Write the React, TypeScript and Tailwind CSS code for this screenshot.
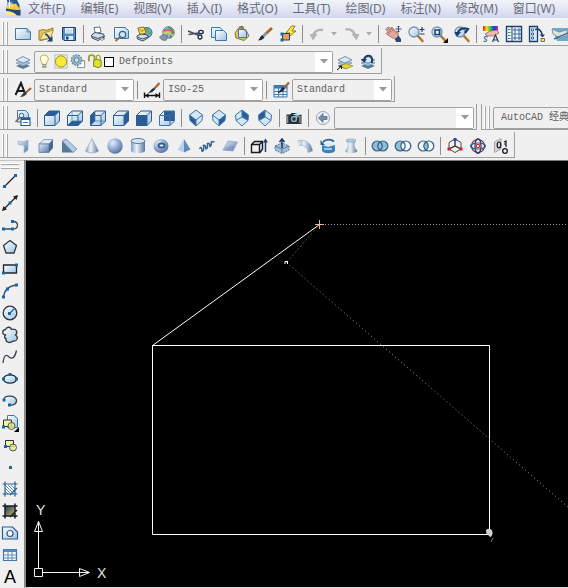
import type { ReactNode } from "react";

type Tool = { label: string; icon: ReactNode };

const NAVY = "#1c3f6e";
const BLUE = "#3d76a8";
const DEEP = "#2b5d94";
const PALE = "#d3e6f5";

function Icon({ children, size = 18 }: { children: ReactNode; size?: number }) {
  return (
    <svg width={size} height={size} viewBox="0 0 18 18" fill="none" aria-hidden="true" className="shrink-0">
      {children}
    </svg>
  );
}

// Gradients shared by every icon on the page
function Gradients() {
  return (
    <svg className="absolute size-0" aria-hidden="true">
      <defs>
        <linearGradient id="paper" x1="0" y1="0" x2="1" y2="1">
          <stop offset="0" stopColor="#ffffff" />
          <stop offset="1" stopColor="#9fc4e2" />
        </linearGradient>
        <linearGradient id="steel" x1="0" y1="0" x2="1" y2="0">
          <stop offset="0" stopColor="#7d9cc4" />
          <stop offset="0.4" stopColor="#eef4fa" />
          <stop offset="1" stopColor="#54779f" />
        </linearGradient>
        <linearGradient id="slope" x1="0" y1="0" x2="1" y2="1">
          <stop offset="0" stopColor="#e4eefa" />
          <stop offset="1" stopColor="#5479ab" />
        </linearGradient>
        <radialGradient id="ball" cx="0.35" cy="0.3" r="0.8">
          <stop offset="0" stopColor="#e6edfb" />
          <stop offset="0.5" stopColor="#91a9d2" />
          <stop offset="1" stopColor="#4b6494" />
        </radialGradient>
        <linearGradient id="rainbow" x1="0" y1="0" x2="1" y2="0">
          <stop offset="0" stopColor="#f01818" />
          <stop offset="0.25" stopColor="#f5e020" />
          <stop offset="0.5" stopColor="#20c840" />
          <stop offset="0.75" stopColor="#2030f0" />
          <stop offset="1" stopColor="#e020c0" />
        </linearGradient>
        <linearGradient id="hatchfill" x1="0" y1="0" x2="1" y2="1">
          <stop offset="0" stopColor="#1f3762" />
          <stop offset="1" stopColor="#c8bb5a" />
        </linearGradient>
      </defs>
    </svg>
  );
}

function Face({ side }: { side: string }) {
  const faces: Record<string, string> = {
    top: "M1.500 6.500L6 2H16.500L12 6.500Z",
    bottom: "M1.500 16.500L6 12H16.500L12 16.500Z",
    left: "M1.500 6.500L6 2V12L1.500 16.500Z",
    right: "M12 6.500L16.500 2V12L12 16.500Z",
    front: "M1.500 6.500H12V16.500H1.500Z",
    back: "M6 2H16.500V12H6Z",
  };
  return (
    <Icon>
      <path d="M1.500 6.500L6 2H16.500V12L12 16.500H1.500Z" fill="url(#paper)" />
      <path d={faces[side]} fill={DEEP} />
      <path
        d="M1.500 6.500L6 2H16.500V12L12 16.500H1.500ZM1.500 6.500H12V16.500M12 6.500L16.500 2"
        stroke={side === "back" ? BLUE : DEEP}
      />
      {(side === "left" || side === "bottom") && <path d="M6 2V12M6 12H16.500M6 12L1.500 16.500" stroke={BLUE} strokeWidth="0.700" />}
    </Icon>
  );
}

function Isometric({ dark, rear }: { dark: string; rear?: boolean }) {
  return (
    <Icon>
      <path d="M9 1L15.500 6L15 11.500L9 17L3 11.500L2.500 6Z" fill={PALE} />
      <path d={dark} fill={DEEP} />
      <path d="M9 1L15.500 6L15 11.500L9 17L3 11.500L2.500 6Z" stroke={BLUE} />
      {rear ? (
        <path d="M9 1V8L15 11.500M9 8L3 11.500" stroke={BLUE} />
      ) : (
        <path d="M2.500 6L9 11L15.500 6M9 11V17" stroke={BLUE} />
      )}
    </Icon>
  );
}

function Layers({ children }: { children?: ReactNode }) {
  return (
    <Icon>
      <path d="M2 13L9 10L16 13L9 16Z" fill="#5a7998" />
      <path d="M2 10L9 7L16 10L9 13Z" fill="#a4bfd6" stroke="#6c8aa8" strokeWidth="0.6" />
      <path d="M2 7L9 3.500L16 7L9 10Z" fill="#dbe9f5" stroke="#5b7a9a" strokeWidth="0.8" />
      {children}
    </Icon>
  );
}

function Lens({ children }: { children?: ReactNode }) {
  return (
    <Icon>
      <path d="M10.500 10.500L15.500 16" stroke="#b8752d" strokeWidth="2.600" strokeLinecap="round" />
      <circle cx="7" cy="7" r="5" fill="url(#paper)" stroke="#7193b0" strokeWidth="1.300" />
      {children}
    </Icon>
  );
}

function Rings({ left, middle, right }: { left?: string; middle?: string; right?: string }) {
  return (
    <Icon>
      <circle cx="6.200" cy="9" r="5" fill={left ?? "#f4f8fb"} />
      <circle cx="11.800" cy="9" r="5" fill={right ?? "#f4f8fb"} />
      <path d="M9 4.900A5 5 0 0 1 9 13.100A5 5 0 0 1 9 4.900Z" fill={middle ?? "#f4f8fb"} />
      <circle cx="6.200" cy="9" r="5" stroke="#345f85" strokeWidth="1.200" />
      <circle cx="11.800" cy="9" r="5" stroke="#345f85" strokeWidth="1.200" />
    </Icon>
  );
}

function Node({ x, y }: { x: number; y: number }) {
  return <rect x={x - 1.5} y={y - 1.5} width="3" height="3" fill="#1668ac" />;
}

const fileTools: Tool[] = [
  {
    label: "新建",
    icon: (
      <Icon>
        <path d="M1.500 3.500H13L16.500 7V14.500H1.500Z" fill="url(#paper)" stroke={BLUE} />
        <path d="M13 3.500V7H16.500" stroke={BLUE} strokeWidth="0.800" />
      </Icon>
    ),
  },
  {
    label: "打开",
    icon: (
      <Icon>
        <path d="M2 15V5.500L7 4.500L9 5.500L16 3L13.500 13L4 15.500Z" fill="#e6c95c" stroke="#9a7a24" />
        <path d="M3 15L6 8L16.500 5L13.500 13Z" fill="#f6e59a" stroke="#9a7a24" strokeWidth="0.700" />
        <path d="M8 9.500C9.500 9 11.500 11 13 14.500" stroke={NAVY} strokeWidth="1.800" />
        <path d="M15.500 11V16.500H10Z" fill={NAVY} />
      </Icon>
    ),
  },
  {
    label: "保存",
    icon: (
      <Icon>
        <path d="M2.500 2.500H15.500V15.500H4L2.500 14Z" fill="#4f8dc0" stroke={NAVY} />
        <path d="M5 3H13V8.500H5Z" fill="#eef5fb" />
        <path d="M6 5H12M6 7H12" stroke="#9fb8cd" strokeWidth="0.800" />
        <path d="M5 11H13V15H5Z" fill="#dce9f4" />
        <path d="M6 11.500H8.500V14.500H6Z" fill={NAVY} />
      </Icon>
    ),
  },
];

const plotTools: Tool[] = [
  {
    label: "打印",
    icon: (
      <Icon>
        <path d="M5 2.500L11 2L12 7L6.500 9Z" fill="#fff" stroke="#5c7187" />
        <path d="M2.500 10L6 7.500L14.500 9L15.500 12L9 15.500L3 13Z" fill="#d5dde5" stroke="#3b5068" />
        <path d="M3 11.500L9 13.500L15 11" stroke="#3b5068" />
        <path d="M10 13L16 13.500L13 15.500Z" fill="#fff" stroke="#5c7187" strokeWidth="0.700" />
      </Icon>
    ),
  },
  {
    label: "打印预览",
    icon: (
      <Icon>
        <path d="M2.500 2.500H13L16.500 5.500V13.500H2.500Z" fill="url(#paper)" stroke={BLUE} />
        <path d="M8 12L3.500 16" stroke="#a4692e" strokeWidth="2" />
        <circle cx="10.500" cy="9.500" r="3.200" fill="#cfe6f5" stroke="#35628a" strokeWidth="1.200" />
      </Icon>
    ),
  },
  {
    label: "发布",
    icon: (
      <Icon>
        <circle cx="12" cy="7.500" r="5" fill="#6cabdc" stroke="#32658f" />
        <path d="M10 3.500C13 4 13 8 16 8.500" stroke="#66a846" strokeWidth="2" />
        <path d="M3 3L9 2L11 8L5 10Z" fill="#ffdb55" stroke="#8b6c16" />
        <path d="M5 4.500L7 6.500L9 4.500" stroke="#8b6c16" />
        <path d="M2 11L6 9L12.500 10L13.500 12.500L8 16L2.500 14Z" fill="#d4dce4" stroke="#384d66" />
        <path d="M3 12.500L8 14L13 12" stroke="#384d66" />
      </Icon>
    ),
  },
  {
    label: "三维 DWF",
    icon: (
      <Icon>
        <circle cx="10.500" cy="7.500" r="5.800" fill="#88bbd8" stroke="#5b86a3" />
        <path d="M10 2C16 4 15 9 12 13" stroke="#40994e" strokeWidth="1.800" />
        <path d="M5.500 6C9 3.500 14 5 16 8" stroke="#d95a4a" strokeWidth="1.500" />
        <path d="M5 8C9 7 13 8 15 11" stroke="#e9c84b" strokeWidth="1.500" />
        <path d="M1.500 12L5 9.500L10 11L8 15.500L4 15Z" fill="#8796a6" stroke="#5c6c7b" strokeWidth="0.700" />
      </Icon>
    ),
  },
];

const clipboardTools: Tool[] = [
  {
    label: "剪切",
    icon: (
      <Icon>
        <path d="M1 6L12 10.500M1.500 9.500L12 8" stroke="#454d5c" strokeWidth="1.400" />
        <ellipse cx="14" cy="7" rx="2.300" ry="1.700" stroke="#222c48" strokeWidth="1.300" />
        <ellipse cx="13" cy="12" rx="1.900" ry="2" stroke="#222c48" strokeWidth="1.300" />
      </Icon>
    ),
  },
  {
    label: "复制",
    icon: (
      <Icon>
        <path d="M1.500 2.500H10L12.500 5V12.500H1.500Z" fill="url(#paper)" stroke={BLUE} />
        <path d="M5.500 5.500H13.500L16.500 8.500V15.500H5.500Z" fill="url(#paper)" stroke={BLUE} />
      </Icon>
    ),
  },
  {
    label: "粘贴",
    icon: (
      <Icon>
        <path d="M6 2.500L13 5L16 11L11 15.500L3 13L2 8Z" fill="#e6c463" stroke="#94752e" />
        <path d="M5.500 4.500H11L13.500 7V12.500H5.500Z" fill="url(#paper)" stroke={BLUE} />
        <path d="M6 2.500L9 1.500L11 3.500" stroke="#716344" strokeWidth="1.400" />
      </Icon>
    ),
  },
  {
    label: "特性匹配",
    icon: (
      <Icon>
        <path d="M16 3L9.500 9" stroke="#a9622b" strokeWidth="2.800" />
        <path d="M10.500 8L7.500 11" stroke="#8697a7" strokeWidth="3" />
        <path d="M8.500 12.500C7 14.500 5 15.500 2 15.500C4 13.500 4 11 6.500 10Z" fill="#222a34" />
      </Icon>
    ),
  },
  {
    label: "块编辑器",
    icon: (
      <Icon>
        <path d="M12.500 1L7 8H11L8.500 13L17 6H13L16 1Z" fill="#ffe63e" stroke="#896f1b" strokeWidth="0.900" />
        <path d="M3.500 8.500H10.500V15H3.500Z" fill="#f19a62" stroke={NAVY} />
        <Node x={3} y={15} />
        <Node x={3} y={9} />
      </Icon>
    ),
  },
];

const undoIcon = (
  <Icon>
    <path d="M5 12C5.500 7 9 4 15 5" stroke="#b2b5b8" strokeWidth="2.600" />
    <path d="M1.500 9H9.500L5 15.500Z" fill="#b2b5b8" />
  </Icon>
);

const redoIcon = (
  <Icon>
    <path d="M2.500 4.500C8 3.500 12 7 12.500 12" stroke="#b2b5b8" strokeWidth="2.600" />
    <path d="M8.500 9H16.500L13.500 15.500Z" fill="#b2b5b8" />
  </Icon>
);

const zoomTools: Tool[] = [
  {
    label: "实时平移",
    icon: (
      <Icon>
        <path
          d="M1.500 4L3 3.500L7 7L3.500 2.500L5 2L9 6L7 2.500L8.500 2.500L12.500 8L12.500 6L14 7L14.500 12L11.500 14.500L6 11.500L2 8.500L3 7.500L5.500 8.500Z"
          fill="#e2a79a"
          stroke="#9b5d59"
          strokeWidth="0.700"
        />
        <path d="M11 14L14.500 10.500L17 14V17H12Z" fill="#234a7b" />
        <path d="M14.500 1V7M11.500 4H17.500M13.500 2L14.500 1L15.500 2M13.500 6L14.500 7L15.500 6" stroke={NAVY} strokeWidth="0.900" />
      </Icon>
    ),
  },
  {
    label: "实时缩放",
    icon: (
      <Lens>
        <path d="M15 2V7M12.500 4.500H17.500M12.500 9H17.500" stroke={NAVY} strokeWidth="1.200" />
      </Lens>
    ),
  },
  {
    label: "窗口缩放",
    icon: (
      <Lens>
        <path d="M5 5H9.500V9.500H5Z" fill="#eef7ff" stroke={NAVY} strokeWidth="1.600" />
        <path d="M18 13V18H13Z" fill="#111" />
      </Lens>
    ),
  },
  {
    label: "缩放上一个",
    icon: (
      <Lens>
        <path d="M4 9C5 5 9 2 15 4L12 8" stroke={NAVY} strokeWidth="2.200" />
        <path d="M1.500 7L8 7L4 12Z" fill={NAVY} />
      </Lens>
    ),
  },
];

const paletteTools: Tool[] = [
  {
    label: "特性",
    icon: (
      <Icon>
        <path d="M1 1H16V6H1Z" fill="url(#rainbow)" />
        <path d="M3 9L8 6L15 5L17 8L11 11H5Z" fill="#f0b8a6" stroke="#805b5b" strokeWidth="0.700" />
        <path d="M6 12C3 10.500 1 13 3.500 14C6 15 4 17.500 1.500 16" stroke="#52749d" strokeWidth="1.200" />
        <path d="M10.500 17L13.500 10L16.500 17M11.500 15H15.500" stroke="#303b50" strokeWidth="1.200" />
      </Icon>
    ),
  },
  {
    label: "设计中心",
    icon: (
      <Icon>
        <path d="M1.500 1.500H16.500V16.500H1.500Z" fill="#edf4fa" stroke={NAVY} strokeWidth="1.400" />
        <path d="M7 2V16" stroke={NAVY} />
        <path d="M3 4.500H5.500M3 7.500H5.500M3 10.500H5.500M3 13.500H5.500" stroke="#4a8d3c" />
        <path d="M9 4H11V6H9ZM13 4H15V6H13ZM9 8H11V10H9ZM13 8H15V10H13Z" stroke={DEEP} strokeWidth="0.900" />
        <path d="M9 12H11V14H9ZM13 12H15V14H13Z" fill="#eee35b" stroke={DEEP} strokeWidth="0.900" />
      </Icon>
    ),
  },
  {
    label: "工具选项板",
    icon: (
      <Icon>
        <path d="M1.500 1.500H9.500V16.500H1.500Z" fill="#dbeaf6" stroke={NAVY} strokeWidth="1.300" />
        <path d="M3.500 4H5.500V6H3.500ZM3.500 8H5.500V10H3.500ZM3.500 12H5.500V14H3.500Z" fill="#fff" stroke={DEEP} strokeWidth="0.900" />
        <path d="M7 4.500C11 3 14 6 14.500 11" stroke={NAVY} strokeWidth="1.600" />
        <path d="M11.500 9.500H17L14.500 12.500Z" fill={NAVY} />
        <path d="M13 13.500H16.500V16.500H13Z" fill="#eee35b" stroke="#555" strokeWidth="0.800" />
      </Icon>
    ),
  },
  {
    label: "图纸集管理器",
    icon: (
      <Icon>
        <path d="M1 3H17V16H6Z" fill="#6fa9c8" />
        <path d="M1 4L8 7L16 5L17 10L9 13L2 9Z" fill="#dfe5e5" stroke="#80949d" />
        <path d="M3 14L17 8" stroke="#3d7190" strokeWidth="1.500" />
      </Icon>
    ),
  },
];

const viewTools: Tool[] = [
  { label: "俯视", icon: <Face side="top" /> },
  { label: "仰视", icon: <Face side="bottom" /> },
  { label: "左视", icon: <Face side="left" /> },
  { label: "右视", icon: <Face side="right" /> },
  { label: "前视", icon: <Face side="front" /> },
  { label: "后视", icon: <Face side="back" /> },
];

const isoTools: Tool[] = [
  { label: "西南等轴测", icon: <Isometric dark="M2.500 6L9 11V17L3 11.500Z" /> },
  { label: "东南等轴测", icon: <Isometric dark="M9 11L15.500 6L15 11.500L9 17Z" /> },
  { label: "东北等轴测", icon: <Isometric rear dark="M9 1L15.500 6L15 11.500L9 8Z" /> },
  { label: "西北等轴测", icon: <Isometric rear dark="M9 1L2.500 6L3 11.500L9 8Z" /> },
];

const solidTools: Tool[] = [
  {
    label: "多段体",
    icon: (
      <Icon>
        <path d="M4 4L9 6V9L4 8Z" fill="#b9d5ee" />
        <path d="M9 5L14 3V13L10 16V8L4 7V4Z" fill="url(#slope)" stroke="#8cadcf" strokeWidth="0.600" />
      </Icon>
    ),
  },
  {
    label: "长方体",
    icon: (
      <Icon>
        <path d="M2 7L7 2.500H16L12 7Z" fill="#dfeaf5" stroke="#6685a8" strokeWidth="0.700" />
        <path d="M2 7H12V15.500H2Z" fill="url(#slope)" stroke="#587799" strokeWidth="0.700" />
        <path d="M12 7L16 2.500V11L12 15.500Z" fill="#4c688a" />
      </Icon>
    ),
  },
  {
    label: "楔体",
    icon: (
      <Icon>
        <path d="M2 4L6 2L17 12L13 15.500Z" fill="#b2cae3" stroke="#607f9f" strokeWidth="0.700" />
        <path d="M2 4V15.500H13Z" fill="#56789c" />
      </Icon>
    ),
  },
  {
    label: "圆锥体",
    icon: (
      <Icon>
        <path d="M9 1.500L15.500 14C13 16.500 5 16.500 2.500 14Z" fill="url(#steel)" stroke="#8295a9" strokeWidth="0.500" />
      </Icon>
    ),
  },
  {
    label: "球体",
    icon: (
      <Icon>
        <circle cx="9" cy="9" r="7.700" fill="url(#ball)" />
      </Icon>
    ),
  },
  {
    label: "圆柱体",
    icon: (
      <Icon>
        <path d="M2 4V14C4 17 14 17 16 14V4Z" fill="url(#steel)" />
        <ellipse cx="9" cy="4" rx="7" ry="2.500" fill="#d4e2ef" stroke="#5d7ca0" />
      </Icon>
    ),
  },
  {
    label: "圆环体",
    icon: (
      <Icon>
        <ellipse cx="9" cy="9" rx="7.500" ry="7" fill="url(#ball)" />
        <ellipse cx="9.500" cy="8.500" rx="3" ry="2" fill="#e9f2fa" stroke="#2f5f8e" strokeWidth="2" />
      </Icon>
    ),
  },
  {
    label: "棱锥体",
    icon: (
      <Icon>
        <path d="M9 2L2.500 13L9 15.500Z" fill="#b8d1ec" />
        <path d="M9 2L15.500 12.500L9 15.500Z" fill="#6389b9" />
      </Icon>
    ),
  },
  {
    label: "螺旋",
    icon: (
      <Icon>
        <path
          d="M1.500 12C3 9 4 11 4 14C6 15 6 9 5.500 8.500C7 8 8 9 8 12C10 12 9.500 7 9.500 6.500C11 6 12 7 12 9.500C14 9 13 5 13.500 4.500L16.500 5"
          stroke="#35638f"
          strokeWidth="1.500"
        />
      </Icon>
    ),
  },
  {
    label: "平面曲面",
    icon: (
      <Icon>
        <path d="M2 13L7 4L16.500 5L12 14Z" fill="url(#slope)" stroke="#8da2c5" strokeWidth="0.700" />
        <path d="M9 9L14.500 9L12 14L2 13Z" fill="#8498c4" opacity="0.600" />
      </Icon>
    ),
  },
];

const solidEditTools: Tool[] = [
  {
    label: "拉伸",
    icon: (
      <Icon>
        <path d="M1.500 7.500L4.500 4.500H12.500V12L10 15.500H1.500ZM1.500 7.500H9.500V15.500M9.500 7.500L12.500 4.500" stroke="#171c24" strokeWidth="1.400" />
        <path d="M15.500 15V4" stroke={NAVY} strokeWidth="1.500" />
        <path d="M13 5.500L15.500 1.500L18 5.500Z" fill={NAVY} />
      </Icon>
    ),
  },
  {
    label: "按住/拖动",
    icon: (
      <Icon>
        <path d="M2 9L9 6L16 9V13L9 16.500L2 13Z" fill="#a8bfd2" stroke="#56789a" strokeDasharray="2 1" />
        <path d="M2 9L9 12L16 9M9 12V16" stroke="#56789a" />
        <path d="M9 11V3M6.500 5L9 2L11.500 5" stroke={NAVY} strokeWidth="1.600" />
      </Icon>
    ),
  },
  {
    label: "扫掠",
    icon: (
      <Icon>
        <path d="M2 4C9 1 16 7 16.500 14L12 15.500C11.500 10 7 7 3 8.500Z" fill="url(#steel)" stroke="#8aa5be" strokeWidth="0.600" />
        <ellipse cx="3" cy="6.300" rx="1.500" ry="2.300" fill="#dce9f5" />
      </Icon>
    ),
  },
  {
    label: "旋转",
    icon: (
      <Icon>
        <path d="M3 8V14C5 17 14 17 16 14V8Z" fill="#3983b8" />
        <path d="M3 8C5 5.500 14 5.500 16 8L9 10Z" fill="#d7eaf8" />
        <path d="M4 5C7 2 12 2 15 4.500" stroke="#24669c" strokeWidth="1.800" />
        <path d="M1.500 3V8H6Z" fill="#24669c" />
        <path d="M5 12H13" stroke="#9cc8e6" strokeWidth="2" />
      </Icon>
    ),
  },
  {
    label: "放样",
    icon: (
      <Icon>
        <path d="M4 3H14C11.500 7 12 10 15.500 14C13 17 5 17 3 14C6.500 10 6.500 7 4 3Z" fill="url(#steel)" />
        <ellipse cx="9" cy="3.500" rx="5" ry="1.500" fill="#b8d0e5" stroke="#7192b4" strokeWidth="0.600" />
      </Icon>
    ),
  },
];

const booleanTools: Tool[] = [
  { label: "并集", icon: <Rings left="#8fbfd6" middle="#8fbfd6" right="#8fbfd6" /> },
  { label: "差集", icon: <Rings left="#8fbfd6" /> },
  { label: "交集", icon: <Rings middle="#8fbfd6" /> },
];

const orbitTools: Tool[] = [
  {
    label: "三维移动",
    icon: (
      <Icon>
        <path d="M9 2L15 5.500V12L9 15.500L3 12V5.500Z" stroke="#33383f" strokeWidth="0.900" />
        <path d="M9 3V9M9 9L3 12M9 9L15 12" stroke="#222" strokeWidth="1.300" />
        <path d="M7.500 1H10.500V4H7.500Z" fill="#2444b8" />
        <path d="M1.500 10.500H4.500V13.500H1.500ZM13.500 10.500H16.500V13.500H13.500Z" fill="#c32424" />
      </Icon>
    ),
  },
  {
    label: "三维旋转",
    icon: (
      <Icon>
        <circle cx="9" cy="9" r="6.500" stroke="#7c2929" strokeWidth="1.200" />
        <ellipse cx="9" cy="9" rx="3" ry="7.500" stroke="#24325b" strokeWidth="1.200" />
        <ellipse cx="9" cy="9" rx="7.500" ry="3" stroke="#28619a" strokeWidth="1.200" />
        <path d="M7.500 7.500H10.500V10.500H7.500Z" fill="#fff" stroke="#d02d2d" />
      </Icon>
    ),
  },
  {
    label: "三维对齐",
    icon: (
      <Icon>
        <path d="M2.500 5L9 1.500V12L2.500 15.500Z" fill="#d4d7da" stroke="#a4a8ad" />
        <ellipse cx="7" cy="8" rx="1.800" ry="3" stroke="#17191c" strokeWidth="1.200" />
        <path d="M12 5L14 4V10M12 7H14" stroke="#17191c" strokeWidth="1.200" />
        <circle cx="13" cy="14" r="2.300" stroke="#17191c" strokeWidth="1.300" />
      </Icon>
    ),
  },
];

const drawTools: Tool[] = [
  {
    label: "直线",
    icon: (
      <Icon>
        <path d="M3.500 14.500L14.500 3.500" stroke="#222" strokeWidth="1.300" />
        <Node x={3.5} y={14.5} />
        <Node x={14.5} y={3.5} />
      </Icon>
    ),
  },
  {
    label: "构造线",
    icon: (
      <Icon>
        <path d="M2 16L16 2" stroke="#222" strokeWidth="1.300" />
        <path d="M1 17L2.500 12L6 15.500ZM17 1L12 2.500L15.500 6Z" fill="#222" />
        <Node x={9} y={9} />
      </Icon>
    ),
  },
  {
    label: "多段线",
    icon: (
      <Icon>
        <path d="M3 13H12M12 5.500C18 5.500 18 13 12 13" stroke="#3c4856" strokeWidth="1.300" />
        <Node x={2.5} y={13} />
        <Node x={11.5} y={13} />
        <Node x={11.5} y={5.5} />
      </Icon>
    ),
  },
  {
    label: "正多边形",
    icon: (
      <Icon>
        <path d="M9 2.500L15.500 7.500L13 15H5L2.500 7.500Z" fill="url(#paper)" stroke="#333a42" strokeWidth="1.300" />
      </Icon>
    ),
  },
  {
    label: "矩形",
    icon: (
      <Icon>
        <path d="M2.500 5H15.500V13H2.500Z" fill="url(#paper)" stroke="#20262d" strokeWidth="1.300" />
        <Node x={2.5} y={13} />
        <Node x={15.5} y={5} />
      </Icon>
    ),
  },
  {
    label: "圆弧",
    icon: (
      <Icon>
        <path d="M2.500 15.500C3 9 7 4 15.500 3" stroke="#4b525b" strokeWidth="1.300" />
        <Node x={2.5} y={15} />
        <Node x={6.5} y={7} />
        <Node x={15.5} y={3} />
      </Icon>
    ),
  },
  {
    label: "圆",
    icon: (
      <Icon>
        <circle cx="9" cy="9" r="6.800" fill="url(#paper)" stroke="#2c333b" strokeWidth="1.300" />
        <path d="M9 9L13 5" stroke="#1668ac" strokeWidth="1.200" />
        <Node x={8.5} y={9.5} />
      </Icon>
    ),
  },
  {
    label: "修订云线",
    icon: (
      <Icon>
        <path
          d="M5 9C1 9 .500 4 4.500 3.500C6 0 10 1 10.500 3.500C15 2 17.500 6 14.500 9C18 11 16 16 12 15C9 18 4 16 5 12.500C3 12 3 10 5 9Z"
          fill="url(#paper)"
          stroke="#353d46"
          strokeWidth="1.300"
        />
      </Icon>
    ),
  },
  {
    label: "样条曲线",
    icon: (
      <Icon>
        <path d="M2 15C3 7 5 6 8 9C12 12 14 9 15.500 2.500" stroke="#3a4047" strokeWidth="1.300" />
      </Icon>
    ),
  },
  {
    label: "椭圆",
    icon: (
      <Icon>
        <ellipse cx="9" cy="9" rx="6.500" ry="4.200" fill="url(#paper)" stroke="#222a32" strokeWidth="1.300" />
        <Node x={2.5} y={9} />
        <Node x={15.5} y={9} />
        <Node x={9} y={4.5} />
      </Icon>
    ),
  },
  {
    label: "椭圆弧",
    icon: (
      <Icon>
        <path d="M3 7C4 3 14 3 15.500 8C16 12 12 13.500 8.500 13" fill="url(#paper)" stroke="#3b434c" strokeWidth="1.300" />
        <Node x={3} y={8} />
        <Node x={8.5} y={13} />
      </Icon>
    ),
  },
  {
    label: "插入块",
    icon: (
      <Icon>
        <path d="M6.500 1.500H13L16.500 4.500V13.500H6.500Z" fill="url(#paper)" stroke={BLUE} />
        <path d="M2.500 6H10.500V12.500H2.500Z" fill="#f6efa4" stroke="#26323d" />
        <circle cx="10.500" cy="12" r="3.500" fill="#e5e98d" stroke="#4e5f48" fillOpacity="0.800" />
        <Node x={2.5} y={13} />
        <path d="M18 13V18H13Z" fill="#000" />
      </Icon>
    ),
  },
  {
    label: "创建块",
    icon: (
      <Icon>
        <path d="M4.500 4.500H12.500V10.500H4.500Z" fill="#f6efa4" stroke="#26323d" />
        <circle cx="12" cy="11.500" r="3.500" fill="#e5e98d" stroke="#4e5f48" fillOpacity="0.800" />
        <Node x={4.5} y={10.5} />
      </Icon>
    ),
  },
  {
    label: "点",
    icon: (
      <Icon>
        <Node x={9.5} y={9.5} />
      </Icon>
    ),
  },
  {
    label: "图案填充",
    icon: (
      <Icon>
        <path d="M4 4H14V14H4Z" fill="#fff" />
        <path d="M4 5L13 14M4 8L10 14M4 11L7 14M7 5L14 12M10 5L14 9" stroke={BLUE} strokeWidth="0.900" />
        <path d="M4 1.500V16.500M14 1.500V16.500M1.500 4H16.500M1.500 14H16.500M9 15L16 8" stroke={DEEP} strokeWidth="1.200" />
      </Icon>
    ),
  },
  {
    label: "渐变色",
    icon: (
      <Icon>
        <path d="M4 4H14V14H4Z" fill="url(#hatchfill)" />
        <path d="M4 1.500V16.500M14 1.500V16.500M1.500 4H16.500M1.500 14H16.500M9 15L16 8" stroke="#171d2a" strokeWidth="1.500" />
      </Icon>
    ),
  },
  {
    label: "面域",
    icon: (
      <Icon>
        <path d="M1.500 3H11.500L16.500 8V15H1.500Z" fill="url(#paper)" stroke={DEEP} strokeWidth="1.200" />
        <circle cx="9" cy="9.500" r="3" fill="#fff" stroke="#33587c" strokeWidth="1.200" />
      </Icon>
    ),
  },
  {
    label: "表格",
    icon: (
      <Icon>
        <path d="M2.500 3.500H15.500V14.500H2.500Z" fill="#f3f8fc" stroke={BLUE} strokeWidth="1.200" />
        <path d="M2.500 3.500H15.500V6H2.500Z" fill="#4d8cc2" />
        <path d="M2.500 9H15.500M2.500 12H15.500M7 5V14.500M11 5V14.500" stroke="#5b91be" />
      </Icon>
    ),
  },
];

function ToolButton({ label, icon }: Tool) {
  return (
    <button type="button" aria-label={label} className="flex h-[22px] w-[23px] shrink-0 items-center justify-center">
      {icon}
    </button>
  );
}

function ToolGroup({ tools }: { tools: Tool[] }) {
  return tools.map((tool) => <ToolButton key={tool.label} {...tool} />);
}

function Separator() {
  return (
    <span className="flex w-1.5 shrink-0 justify-center">
      <span className="h-[18px] w-px bg-[#8c8c8c]" />
    </span>
  );
}

function Toolbar({ label, wide, children }: { label: string; wide?: boolean; children: ReactNode }) {
  return (
    <div
      role="toolbar"
      aria-label={label}
      className={`flex h-[26px] shrink-0 items-center overflow-hidden border-b border-[#a0a0a0] pt-0.5 ${
        wide ? "min-w-0 flex-1" : "border-r pr-0.5"
      }`}
    >
      <span className="flex h-full w-[11px] shrink-0 gap-0.5 pl-0.5">
        <span className="w-0.5 border-r border-[#a8a8a8] bg-white" />
        <span className="w-0.5 border-r border-[#a8a8a8] bg-white" />
      </span>
      {children}
    </div>
  );
}

function FlyoutArrow({ label }: { label: string }) {
  return (
    <button type="button" aria-label={label} className="flex h-[22px] w-3 shrink-0 items-center justify-center">
      <svg width="6" height="4" viewBox="0 0 6 4" aria-hidden="true">
        <path d="M0 0H6L3 3.500Z" fill="#a9acaf" />
      </svg>
    </button>
  );
}

function ComboBox({
  label,
  value,
  width,
  inset = "pl-1",
  children,
}: {
  label: string;
  value: string;
  width: string;
  inset?: string;
  children?: ReactNode;
}) {
  return (
    <div className={`relative h-[22px] shrink-0 ${width}`}>
      <select
        aria-label={label}
        defaultValue={value}
        className={`block size-full appearance-none rounded-xs border border-[#a0a0a0] bg-[#f0f0f0] font-['Liberation_Mono','Noto_Sans_CJK_SC',monospace] text-[10px] text-[#5f5f5f] ${inset}`}
      >
        <option>{value}</option>
      </select>
      <span className="pointer-events-none absolute inset-y-px right-px flex w-[17px] items-center justify-center bg-white">
        <svg width="8" height="5" viewBox="0 0 8 5" aria-hidden="true">
          <path d="M0 0H8L4 4.500Z" fill="#999" />
        </svg>
      </span>
      {children && (
        <span className="pointer-events-none absolute inset-y-0 left-0.5 flex items-center">{children}</span>
      )}
    </div>
  );
}

function LayerState() {
  return (
    <>
      <Icon size={17}>
        <path d="M6.500 12C6.500 9 4.500 9 4.500 6C4.500 .800 13 .800 13 6C13 9 11 9 11 12Z" fill="#fffce0" stroke="#b4ab3f" />
        <path d="M6.500 12H11V15.500H6.500Z" fill="#878768" />
        <path d="M6.500 13.500H11" stroke="#fff" strokeWidth="0.700" />
      </Icon>
      <Icon size={17}>
        <path d="M2 2H15V16H2Z" stroke="#9ca58b" strokeWidth="0.700" />
        <circle cx="8.500" cy="9" r="6" fill="#f7e936" stroke="#94902a" />
      </Icon>
      <Icon size={17}>
        <path d="M8 8H15.500V15.500H8Z" fill="#fff" stroke="#7e8790" />
        <circle cx="7" cy="7.500" r="5.500" fill="#9db7c9" stroke="#6388a2" strokeDasharray="2 1" strokeWidth="1.400" />
        <circle cx="7" cy="7.500" r="2.500" fill="#d4e4ed" stroke="#527894" />
      </Icon>
      <Icon size={17}>
        <path d="M2 9V4.500C2 1.500 8 1.500 8 4.500V9" stroke="#9ba329" strokeWidth="2" />
        <path d="M7 8L10 6.500L15 8V14L12 15.500L7 14Z" fill="#e2df30" stroke="#777a22" />
        <path d="M10 7V3.500C11 1.500 14 2 14 5V8" stroke="#9ba329" strokeWidth="1.300" />
      </Icon>
      <span className="size-2.5 border border-black bg-white" />
    </>
  );
}

const menus = [
  "文件(F)",
  "编辑(E)",
  "视图(V)",
  "插入(I)",
  "格式(O)",
  "工具(T)",
  "绘图(D)",
  "标注(N)",
  "修改(M)",
  "窗口(W)",
];

function MenuBar() {
  return (
    <header className="flex h-5 shrink-0 items-start overflow-hidden border-b-2 border-[#f6f6fa] bg-linear-to-b from-[#f1f3fa] via-[#e4e6f4] to-[#d2d5ee] pl-1">
      <svg width="18" height="18" viewBox="0 0 18 18" className="shrink-0" aria-hidden="true">
        <path d="M3 0H13L15.500 5V10L3 7Z" fill="#27568c" />
        <path d="M2 6L12 3.500L16.500 10V15.500H2Z" fill="#f4ca45" />
        <path d="M2 9L8 11L16.500 15.500H2Z" fill="#fbe88c" />
        <path d="M2 8.500C8 9 12 11 16.500 9.500V15.500H13C10 12 6 11 2 11Z" fill="#214a82" />
        <path d="M5.500 0V8M2 4H9.500M3 1.500L8 6.500M8 1.500L3 6.500" stroke="#fff" strokeWidth="0.900" />
      </svg>
      <nav aria-label="菜单" className="flex gap-[15px] pl-1.5">
        {menus.map((menu) => (
          <button key={menu} type="button" className="shrink-0 text-xs leading-[18px] whitespace-nowrap text-[#666b78]">
            {menu}
          </button>
        ))}
      </nav>
    </header>
  );
}

function DrawingArea() {
  return (
    <main className="relative min-w-0 flex-1 overflow-hidden border-t border-b border-l-2 border-t-[#777] border-b-[#dcdcdc] border-l-[#8a8a8a] bg-black">
      <svg className="absolute inset-0 size-full" fill="none" role="img" aria-label="模型空间">
        <g stroke="#fff">
          <path d="M126.500 184.500H463.500V373.500H126.500Z" />
          <path d="M126.500 184.500L293.500 63.500" />
        </g>
        <g stroke="#9a9a9a">
          <path d="M296 63.500H2000" strokeDasharray="1 2" />
          <path d="M293.500 63.500L260.500 101.500" strokeDasharray="1 3" />
          <path d="M260.500 101.500L1130 857" strokeDasharray="1 3" />
        </g>
        <path d="M289 63.500H298M293.500 59V68" stroke="#f0b49a" />
        <path d="M259 103V100.500H262M261.500 100V103" stroke="#fff" />
        <path d="M460 370C460 367 466 367 466.500 371C467 374 465 376 464 376C463 374 460 374 460 370Z" fill="#d0d0d0" />
        <path d="M467 377L465 381" stroke="#777" />
        {/* UCS icon */}
        <g stroke="#f4f4f4">
          <path d="M8.500 407.500H16.500V415.500H8.500Z" />
          <path d="M12.500 407V370M17 411.500H53" />
          <path d="M12.500 360.500L8.500 370.500H16.500ZM12.500 360V370" />
          <path d="M63.500 411.500L53.500 407.500V415.500ZM53 411.500H63" />
        </g>
        <g fill="#e4e4e4" fontSize="14" fontFamily="Liberation Sans, sans-serif">
          <text x="10" y="354">
            Y
          </text>
          <text x="71" y="417">
            X
          </text>
        </g>
      </svg>
    </main>
  );
}

export default function App() {
  return (
    <div className="flex min-h-screen flex-col overflow-hidden bg-[#f0f0f0] font-['Noto_Sans','Noto_Sans_CJK_SC',sans-serif]">
      <Gradients />
      <MenuBar />

      <div className="flex shrink-0 flex-col gap-0.5 pb-0.5">
        <div className="flex">
          <Toolbar label="标准" wide>
            <ToolGroup tools={fileTools} />
            <Separator />
            <ToolGroup tools={plotTools} />
            <Separator />
            <ToolGroup tools={clipboardTools} />
            <Separator />
            <ToolButton label="放弃" icon={undoIcon} />
            <FlyoutArrow label="放弃列表" />
            <ToolButton label="重做" icon={redoIcon} />
            <FlyoutArrow label="重做列表" />
            <Separator />
            <ToolGroup tools={zoomTools} />
            <Separator />
            <ToolGroup tools={paletteTools} />
          </Toolbar>
        </div>

        <div className="flex">
          <Toolbar label="图层">
            <ToolButton label="图层特性管理器" icon={<Layers />} />
            <ComboBox label="图层" value="Defpoints" width="w-[299px]" inset="pl-[84px]">
              <LayerState />
            </ComboBox>
            <ToolButton
              label="置为当前"
              icon={
                <Layers>
                  <path d="M4 13L10 10.500L17 13L10 16Z" fill="#ded43c" stroke="#8b8625" strokeWidth="0.600" />
                  <path d="M1 17L5 13.500M2.500 13H5.500V16" stroke="#111" />
                </Layers>
              }
            />
            <ToolButton
              label="上一个图层"
              icon={
                <Layers>
                  <path d="M5 7C6 2 12 1 13 6V10" stroke={NAVY} strokeWidth="2" />
                  <path d="M2 6H8L5 10Z" fill={NAVY} />
                </Layers>
              }
            />
          </Toolbar>
        </div>

        <div className="flex">
          <Toolbar label="样式">
            <ToolButton
              label="文字样式"
              icon={
                <Icon>
                  <path d="M1.500 14L7 2L11.500 14M4 10H10" stroke="#17191d" strokeWidth="2" />
                  <path d="M17 7L12 11.500" stroke="#a9622b" strokeWidth="2.200" />
                  <path d="M13 12C11 15 9 16 6 16C8 14 9 12 11 10.500Z" fill="#38404a" />
                </Icon>
              }
            />
            <ComboBox label="文字样式" value="Standard" width="w-[100px]" />
            <Separator />
            <ToolButton
              label="标注样式"
              icon={
                <Icon>
                  <path d="M1.500 11.500V17M16.500 11.500V17M2 14.500H16" stroke="#111" strokeWidth="1.400" />
                  <path d="M2 14.500L5.500 12V17ZM16 14.500L12.500 12V17Z" fill="#111" />
                  <path d="M16.500 2L11 8" stroke="#a9622b" strokeWidth="2.200" />
                  <path d="M12 8.500C10 11 8 12 5 12C8 10 8 8 10.500 7Z" fill="#222932" />
                </Icon>
              }
            />
            <ComboBox label="标注样式" value="ISO-25" width="w-[100px]" />
            <Separator />
            <ToolButton
              label="表格样式"
              icon={
                <Icon>
                  <path d="M2 4.500H15V16H2Z" fill="#e8f2fa" stroke={BLUE} />
                  <path d="M2 4.500H15V7.500H2Z" fill="#397eb9" />
                  <path d="M2 10.500H15M2 13.500H15M6.500 7V16M11 7V16" stroke={BLUE} strokeWidth="0.900" />
                  <path d="M17 1.500L12 7" stroke="#a9622b" strokeWidth="2.200" />
                  <path d="M13 7.500C11 11 8 12 5.500 12C8 10 9 7 11 6Z" fill="#222932" />
                </Icon>
              }
            />
            <ComboBox label="表格样式" value="Standard" width="w-[100px]" />
          </Toolbar>
        </div>

        <div className="flex gap-1">
          <Toolbar label="视图">
            <ToolButton
              label="命名视图"
              icon={
                <Icon>
                  <path d="M3.500 1.500H11.500L14.500 4.500V13H3.500Z" fill="url(#paper)" stroke={BLUE} />
                  <path d="M6 8L1.500 13" stroke="#9f673a" strokeWidth="1.800" />
                  <circle cx="7.500" cy="6.500" r="2.200" fill="#e7f4fc" stroke={DEEP} />
                  <path d="M7 9H16V16.500H7Z" fill="#fff" stroke={DEEP} strokeWidth="1.200" />
                  <path d="M7 8.500H16V11H7Z" fill={DEEP} />
                  <path d="M9 13.500H14" stroke={BLUE} />
                </Icon>
              }
            />
            <Separator />
            <ToolGroup tools={viewTools} />
            <Separator />
            <ToolGroup tools={isoTools} />
            <Separator />
            <ToolButton
              label="创建相机"
              icon={
                <Icon>
                  <path d="M1.500 5.500H5L6.500 4H12L13 5.500H16.500V15H1.500Z" fill="#30363f" />
                  <path d="M2.500 7V14M15 7V14" stroke="#8b949e" strokeWidth="1.400" />
                  <circle cx="9" cy="10" r="4" fill="#8aa6b9" stroke="#12161b" />
                  <circle cx="9" cy="10" r="1.800" fill="#273d51" />
                  <path d="M12 2V9M8.500 5.500H15.500M9.500 3L14.500 8M14.500 3L9.500 8" stroke="#c5ecfc" strokeWidth="0.900" />
                </Icon>
              }
            />
            <Separator />
            <ToolButton
              label="上一个视图"
              icon={
                <Icon>
                  <circle cx="9" cy="9" r="6.500" fill="#f1f4f7" stroke="#92a4b4" />
                  <path d="M4.500 9L9 4.500V7.500H13V10.500H9V13.500Z" fill="#7492af" stroke="#48698b" strokeWidth="0.800" />
                </Icon>
              }
            />
            <ComboBox label="视口" value="" width="w-[140px]" />
          </Toolbar>
          <div className="flex min-w-0 flex-1 border-l border-[#a0a0a0]">
            <Toolbar label="工作空间" wide>
              <ComboBox label="工作空间" value="AutoCAD 经典" width="w-[180px]" inset="pl-[7px]" />
            </Toolbar>
          </div>
        </div>

        <div className="flex">
          <Toolbar label="建模">
            <ToolGroup tools={solidTools} />
            <Separator />
            <ToolGroup tools={solidEditTools} />
            <Separator />
            <ToolGroup tools={booleanTools} />
            <Separator />
            <ToolGroup tools={orbitTools} />
          </Toolbar>
        </div>
      </div>

      <div className="flex flex-1">
        <aside role="toolbar" aria-label="绘图" className="flex w-6 shrink-0 flex-col border-t border-[#c4c4c4] pr-1">
          <span className="mx-px flex h-[9px] shrink-0 flex-col gap-0.5 pt-0.5">
            <span className="h-0.5 border-b border-[#a8a8a8] bg-white" />
            <span className="h-0.5 border-b border-[#a8a8a8] bg-white" />
          </span>
          {drawTools.map(({ label, icon }) => (
            <button key={label} type="button" aria-label={label} className="flex h-[22px] w-5 shrink-0 items-center justify-center">
              {icon}
            </button>
          ))}
          <button type="button" aria-label="多行文字" className="flex h-[22px] w-5 shrink-0 items-center justify-center font-['Liberation_Sans',sans-serif] text-lg leading-none text-black">
            A
          </button>
        </aside>
        <DrawingArea />
      </div>
    </div>
  );
}
